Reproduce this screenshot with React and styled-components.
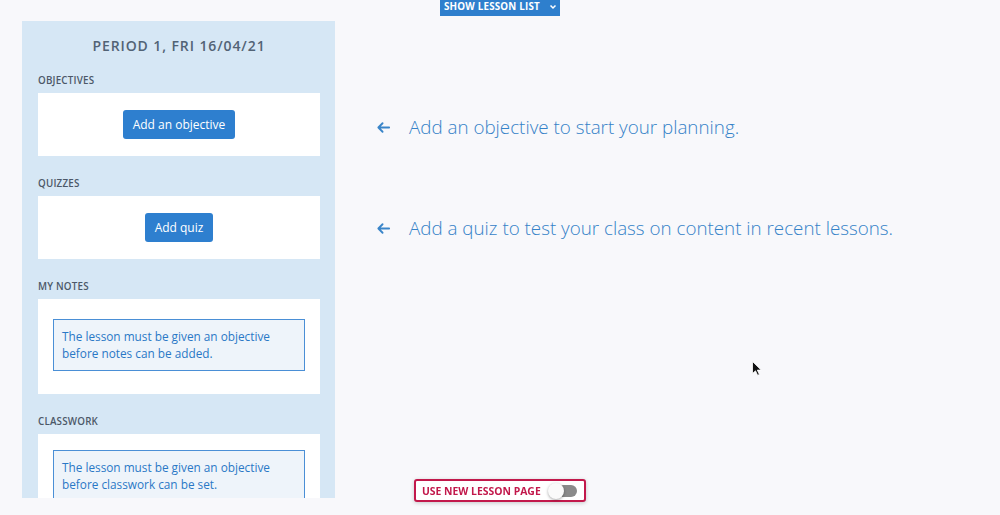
import React from 'react';
import styled, { createGlobalStyle } from 'styled-components';

const Global = createGlobalStyle`
    html, body {
        margin: 0;
        padding: 0;
        background: #f8f8fb;
        font-family: "Open Sans", "Noto Sans", sans-serif;
        overflow: hidden;
    }
`;

/* ------------------------------------------------------------- Top bar --- */

const TopBar = styled.div`
    display: flex;
    justify-content: center;
    height: 16px;
`;

const ListToggle = styled.button`
    display: inline-flex;
    align-items: center;
    gap: 9px;
    height: 16px;
    width: 120px;
    padding: 0 0 3px 4px;
    box-sizing: border-box;
    border: 0;
    background: #2e7fcd;
    color: #fff;
    font-family: inherit;
    font-weight: 700;
    font-size: 9.8px;
    letter-spacing: 0.2px;
    white-space: nowrap;
    cursor: pointer;

    svg { width: 8px; height: 8px; }
`;

/* ---------------------------------------------------------------- Page --- */

const Page = styled.div`
    display: flex;
    align-items: flex-start;
    padding: 5px 0 0 22px;
    gap: 41px;
`;

const Sidebar = styled.aside`
    width: 313px;
    height: 477px;
    overflow: hidden;
    box-sizing: border-box;
    background: #d6e7f5;
    padding: 15px 15px 0 16px;
`;

const Title = styled.h2`
    margin: 0 0 18px;
    text-align: center;
    font-size: 14px;
    line-height: 20px;
    font-weight: 600;
    letter-spacing: 0.9px;
    color: #526375;
`;

const SectionLabel = styled.h3`
    margin: 0 0 7px;
    padding-top: 1px;
    font-size: 9.8px;
    line-height: 11px;
    font-weight: 600;
    letter-spacing: 0.2px;
    color: #4c5868;
`;

const Card = styled.div`
    background: #fff;
    box-sizing: border-box;
    min-height: ${p => p.h || 63}px;
    padding: ${p => p.pad || '0 15px'};
    margin-bottom: 21px;
    display: flex;
    flex-direction: column;
    justify-content: ${p => (p.center ? 'center' : 'flex-start')};
    align-items: ${p => (p.center ? 'center' : 'stretch')};
`;

const Primary = styled.button`
    height: 29px;
    padding: 0 10px;
    border: 0;
    border-radius: 3px;
    background: #2e7fcf;
    color: #fff;
    font-family: inherit;
    font-size: 12px;
    cursor: pointer;
`;

const Notice = styled.div`
    border: 1px solid #4a8fd6;
    background: #eef4fa;
    color: #2a78c6;
    font-size: 11.8px;
    line-height: 17px;
    padding: 8px;
`;

/* --------------------------------------------------------------- Hints --- */

const Hints = styled.div`
    display: flex;
    flex-direction: column;
    gap: 77px;
    padding-top: 94px;
`;

const Hint = styled.p`
    margin: 0;
    display: flex;
    align-items: center;
    gap: 18px;
    font-size: 18.8px;
    line-height: 24px;
    font-weight: 300;
    color: #3582c8;
    white-space: nowrap;

    svg { width: 15px; height: 15px; flex-shrink: 0; }
`;

const Arrow = () => (
    <svg viewBox="0 0 16 16" fill="none" stroke="#3a85c9" strokeWidth="2" strokeLinecap="round" strokeLinejoin="round">
        <path d="M14 8H2.5M7 3.5L2.5 8 7 12.5" />
    </svg>
);

/* -------------------------------------------------------------- Switch --- */

const NewPageToggle = styled.label`
    position: fixed;
    left: 414px;
    top: 479px;
    width: 172px;
    height: 23px;
    box-sizing: border-box;
    display: flex;
    align-items: center;
    justify-content: space-between;
    padding: 0 7px 0 6px;
    border: 2px solid #c2184b;
    border-radius: 3px;
    background: #fff;
    box-shadow: 0 1px 4px rgba(0, 0, 0, 0.2);
    color: #c2184b;
    font-size: 10.4px;
    font-weight: 700;
    white-space: nowrap;
`;

const Track = styled.span`
    position: relative;
    width: 27px;
    height: 12px;
    border-radius: 6px;
    background: #8a8a8a;

    &::after {
        content: '';
        position: absolute;
        left: -2px;
        top: -2px;
        width: 16px;
        height: 16px;
        border-radius: 50%;
        background: #fafafa;
        box-shadow: 0 1px 3px rgba(0, 0, 0, 0.35);
    }
`;

const Cursor = styled.svg`
    position: fixed;
    left: 752px;
    top: 361px;
    width: 10px;
    height: 15px;
`;

export default function App() {
    return (
        <>
            <Global />
            <TopBar>
                <ListToggle>
                    SHOW LESSON LIST
                    <svg viewBox="0 0 8 8" fill="none" stroke="#fff" strokeWidth="1.5">
                        <path d="M1.5 2.5L4 5l2.5-2.5" />
                    </svg>
                </ListToggle>
            </TopBar>
            <Page>
                <Sidebar>
                    <Title>PERIOD 1, FRI 16/04/21</Title>

                    <SectionLabel>OBJECTIVES</SectionLabel>
                    <Card center>
                        <Primary>Add an objective</Primary>
                    </Card>

                    <SectionLabel>QUIZZES</SectionLabel>
                    <Card center>
                        <Primary>Add quiz</Primary>
                    </Card>

                    <SectionLabel>MY NOTES</SectionLabel>
                    <Card h={95} pad="20px 15px">
                        <Notice>The lesson must be given an objective before notes can be added.</Notice>
                    </Card>

                    <SectionLabel>CLASSWORK</SectionLabel>
                    <Card h={95} pad="16px 15px">
                        <Notice>The lesson must be given an objective before classwork can be set.</Notice>
                    </Card>
                </Sidebar>

                <Hints>
                    <Hint><Arrow />Add an objective to start your planning.</Hint>
                    <Hint><Arrow />Add a quiz to test your class on content in recent lessons.</Hint>
                </Hints>
            </Page>

            <NewPageToggle>
                USE NEW LESSON PAGE
                <Track />
            </NewPageToggle>

            <Cursor viewBox="0 0 10 15">
                <path d="M0.5 0.5V12.5L3.5 9.8L5.6 14.3L7.4 13.5L5.3 9.1H9.2Z" fill="#111" stroke="#fff" strokeWidth="0.8" />
            </Cursor>
        </>
    );
}
